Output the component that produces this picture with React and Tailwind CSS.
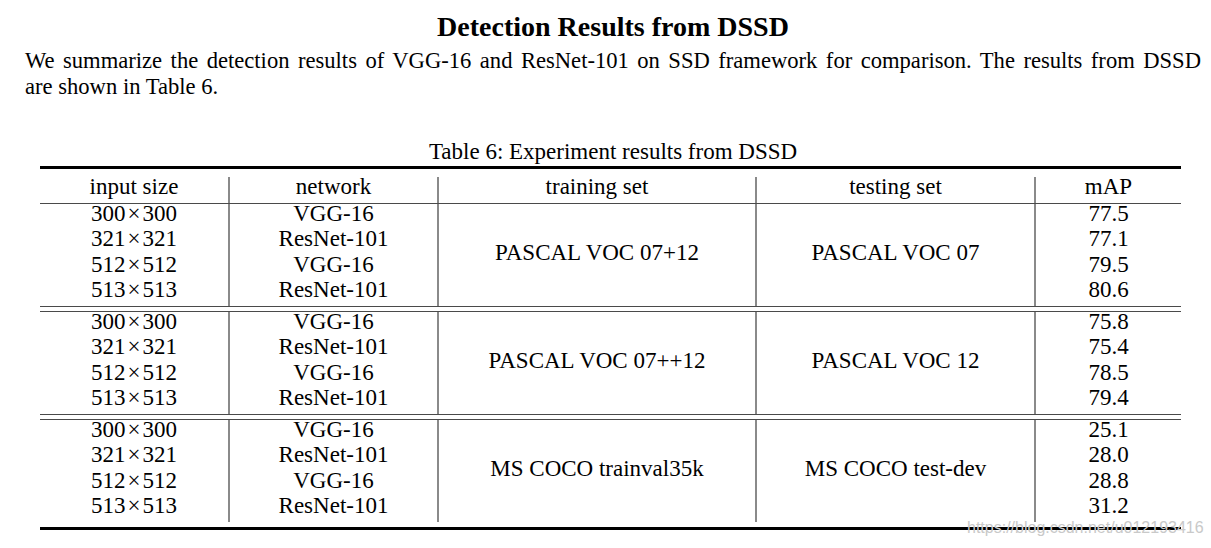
import React from "react";

const groups = [
  {
    train: "PASCAL VOC 07+12",
    test: "PASCAL VOC 07",
    maps: ["77.5", "77.1", "79.5", "80.6"],
  },
  {
    train: "PASCAL VOC 07++12",
    test: "PASCAL VOC 12",
    maps: ["75.8", "75.4", "78.5", "79.4"],
  },
  {
    train: "MS COCO trainval35k",
    test: "MS COCO test-dev",
    maps: ["25.1", "28.0", "28.8", "31.2"],
  },
];

const sizes = ["300", "321", "512", "513"];
const nets = ["VGG-16", "ResNet-101", "VGG-16", "ResNet-101"];

// one row of the tabular: baseline sits 17.5px below the row top
const Cell = ({ children }) => (
  <div className="h-[25.5px] leading-[19.5px] text-center whitespace-nowrap">
    {children}
  </div>
);

const ThinRule = () => <div className="h-px bg-[#4a4a4a]" />;

const Group = ({ group }) => (
  <div className="flex">
    <div className="w-[188px]">
      {sizes.map((s, i) => (
        <Cell key={i}>
          {s}
          <span className="px-[2px]">×</span>
          {s}
        </Cell>
      ))}
    </div>
    <div className="w-[209px] border-l-2 border-[#8a8a8a]">
      {nets.map((n, i) => (
        <Cell key={i}>{n}</Cell>
      ))}
    </div>
    <div className="w-[318px] border-l-2 border-[#8a8a8a] flex items-center justify-center pb-[3px] leading-[19.5px] whitespace-nowrap">
      {group.train}
    </div>
    <div className="w-[279px] border-l-2 border-[#8a8a8a] flex items-center justify-center pb-[3px] leading-[19.5px] whitespace-nowrap">
      {group.test}
    </div>
    <div className="w-[147px] border-l-2 border-[#8a8a8a]">
      {group.maps.map((m, i) => (
        <Cell key={i}>{m}</Cell>
      ))}
    </div>
  </div>
);

const App = () => {
  return (
    <div className="relative w-[1211px] h-[548px] overflow-hidden bg-white text-black font-['Liberation_Serif',serif]">
      <div className="pl-[25px] pr-[10px]">
        <h1 className="pt-[11px] text-center text-[28px] leading-[32px] font-bold">
          Detection Results from DSSD
        </h1>

        <div className="mt-[5px] text-[22.6px] leading-[26px]">
          <div className="text-justify [text-align-last:justify] whitespace-nowrap">
            We summarize the detection results of VGG-16 and ResNet-101 on SSD
            framework for comparison. The results from DSSD
          </div>
          <div>are shown in Table 6.</div>
        </div>

        <p className="mt-[39px] text-center text-[23px] leading-[25px]">
          Table 6: Experiment results from DSSD
        </p>

        <div className="mt-[2px] ml-[15px] w-[1141px] text-[23px]">
          <div className="h-[3px] bg-black" />
          <div className="h-[8px]" />
          <div className="flex">
            <div className="w-[188px]">
              <Cell>input size</Cell>
            </div>
            <div className="w-[209px] border-l-2 border-[#8a8a8a]">
              <Cell>network</Cell>
            </div>
            <div className="w-[318px] border-l-2 border-[#8a8a8a]">
              <Cell>training set</Cell>
            </div>
            <div className="w-[279px] border-l-2 border-[#8a8a8a]">
              <Cell>testing set</Cell>
            </div>
            <div className="w-[147px] border-l-2 border-[#8a8a8a]">
              <Cell>mAP</Cell>
            </div>
          </div>
          <ThinRule />
          {groups.map((g, i) => (
            <div key={i}>
              {i > 0 && (
                <div>
                  <ThinRule />
                  <div className="h-[4px]" />
                  <ThinRule />
                </div>
              )}
              <Group group={g} />
            </div>
          ))}
          <div className="h-[5px]" />
          <div className="h-[3px] bg-black" />
        </div>
      </div>

      <div className="absolute left-[967px] top-[520px] whitespace-nowrap font-['Liberation_Sans',sans-serif] text-[16px] leading-[16px] text-[#c9c9c9]">
        https://blog.csdn.net/u012193416
      </div>
    </div>
  );
};

export default App;
